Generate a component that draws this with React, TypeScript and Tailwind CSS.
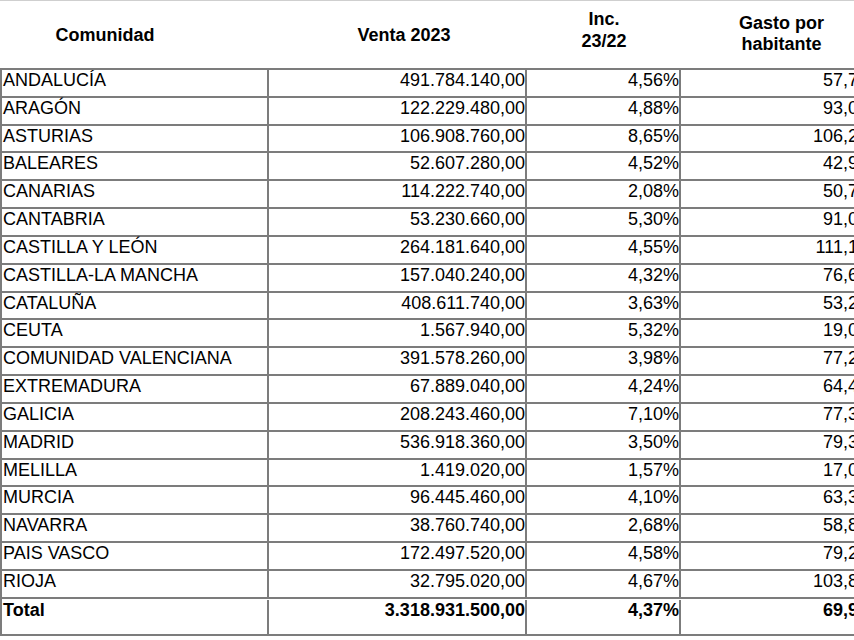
import React from 'react';

const rows: [string, string, string, string][] = [
  ['ANDALUCÍA', '491.784.140,00', '4,56%', '57,75'],
  ['ARAGÓN', '122.229.480,00', '4,88%', '93,02'],
  ['ASTURIAS', '106.908.760,00', '8,65%', '106,25'],
  ['BALEARES', '52.607.280,00', '4,52%', '42,94'],
  ['CANARIAS', '114.222.740,00', '2,08%', '50,73'],
  ['CANTABRIA', '53.230.660,00', '5,30%', '91,05'],
  ['CASTILLA Y LEÓN', '264.181.640,00', '4,55%', '111,12'],
  ['CASTILLA-LA MANCHA', '157.040.240,00', '4,32%', '76,61'],
  ['CATALUÑA', '408.611.740,00', '3,63%', '53,24'],
  ['CEUTA', '1.567.940,00', '5,32%', '19,01'],
  ['COMUNIDAD VALENCIANA', '391.578.260,00', '3,98%', '77,27'],
  ['EXTREMADURA', '67.889.040,00', '4,24%', '64,40'],
  ['GALICIA', '208.243.460,00', '7,10%', '77,38'],
  ['MADRID', '536.918.360,00', '3,50%', '79,31'],
  ['MELILLA', '1.419.020,00', '1,57%', '17,03'],
  ['MURCIA', '96.445.460,00', '4,10%', '63,36'],
  ['NAVARRA', '38.760.740,00', '2,68%', '58,80'],
  ['PAIS VASCO', '172.497.520,00', '4,58%', '79,26'],
  ['RIOJA', '32.795.020,00', '4,67%', '103,84'],
];

const cell = 'border-r-2 border-[#7c7c7c] leading-5';

export default function App() {
  return (
    <div className="w-[854px] h-[640px] overflow-hidden bg-white text-black border-t border-[#cfcfcf]" style={{ fontFamily: '"Liberation Sans", Arial, sans-serif' }}>
      <div className="w-[870px]">
        {/* cabecera */}
        <div className="flex h-[67px] font-bold text-[18px]">
          <div className="w-[269px] pr-[59px] pt-[23px] text-center leading-[22px]">Comunidad</div>
          <div className="w-[258px] pl-[12px] pt-[23px] text-center leading-[22px]">Venta 2023</div>
          <div className="w-[154px] pt-[7px] text-center leading-[22px]">
            Inc.
            <br />
            23/22
          </div>
          <div className="w-[189px] pl-[12px] pt-[12px] text-center leading-[21px]">
            Gasto por
            <br />
            habitante
          </div>
        </div>

        <div className="border-l-2 border-t-2 border-[#7c7c7c] text-[18px]">
          {rows.map(([name, venta, inc, gasto]) => (
            <div key={name} className="flex h-[27.84px] border-b-2 border-[#7c7c7c]">
              <div className={`w-[267px] text-left pl-[1px] ${cell}`}>{name}</div>
              <div className={`w-[258px] text-right ${cell}`}>{venta}</div>
              <div className={`w-[154px] text-right ${cell}`}>{inc}</div>
              <div className={`w-[189px] text-right ${cell}`}>{gasto}</div>
            </div>
          ))}
          <div className="flex h-[37px] border-b-2 border-[#7c7c7c] font-bold pt-[1px]">
            <div className={`w-[267px] text-left pl-[1px] ${cell}`}>Total</div>
            <div className={`w-[258px] text-right ${cell}`}>3.318.931.500,00</div>
            <div className={`w-[154px] text-right ${cell}`}>4,37%</div>
            <div className={`w-[189px] text-right ${cell}`}>69,95</div>
          </div>
        </div>
      </div>
    </div>
  );
}
